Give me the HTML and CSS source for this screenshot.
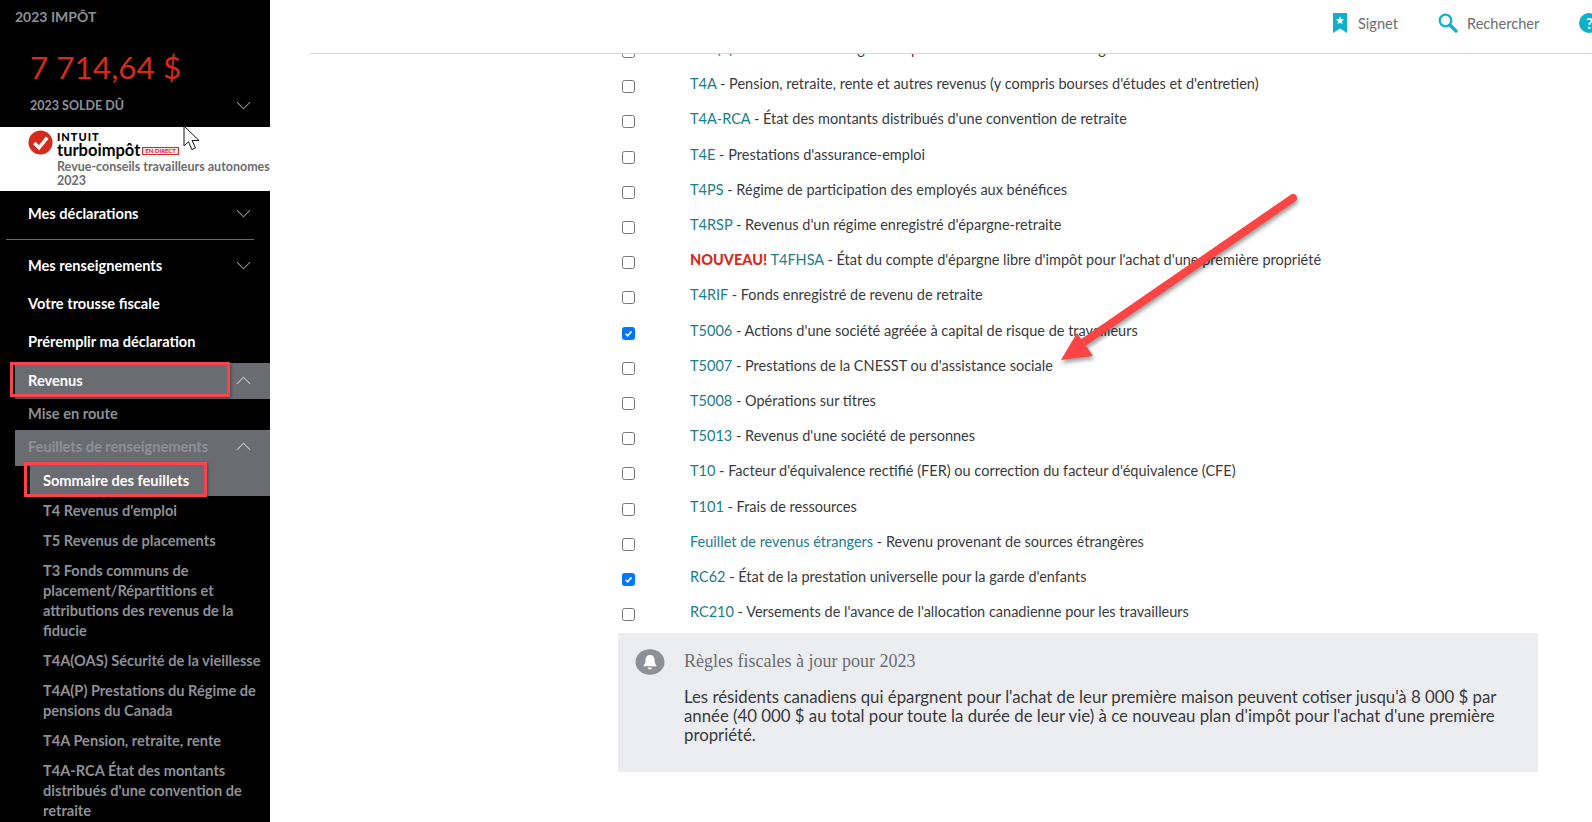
FILE: index.html
```html
<!DOCTYPE html>
<html lang="fr">
<head>
<meta charset="utf-8">
<title>TurboImpôt</title>
<link rel="stylesheet" href="styles.css">
</head>
<body>
<div class="app">
  <aside class="side">
    <div class="year">2023 IMPÔT</div>
    <div class="amount">7 714,64 $</div>
    <div class="due"><span>2023 SOLDE DÛ</span><svg class="chev" viewBox="0 0 16 9"><path d="M1 1l7 7 7-7"/></svg></div>
    <div class="brand">
      <svg class="tick" viewBox="0 0 26 26"><circle cx="13" cy="13" r="12.5" fill="#d52b1e"/><path d="M6.5 13.5l5 5 8.5-10.5" fill="none" stroke="#fff" stroke-width="3.6"/></svg>
      <div class="brand-text">
        <div class="intuit">INTUIT</div>
        <div class="turbo"><span>turboimpôt</span><span class="live">EN DIRECT</span></div>
        <div class="sub">Revue-conseils travailleurs autonomes<br>2023</div>
      </div>
    </div>
    <nav class="nav">
      <div class="item first"><span>Mes déclarations</span><svg class="chev" viewBox="0 0 16 9"><path d="M1 1l7 7 7-7"/></svg></div>
      <hr class="rule">
      <div class="item"><span>Mes renseignements</span><svg class="chev" viewBox="0 0 16 9"><path d="M1 1l7 7 7-7"/></svg></div>
      <div class="item">Votre trousse fiscale</div>
      <div class="item">Préremplir ma déclaration</div>
      <div class="band"><span>Revenus</span><svg class="chev" viewBox="0 0 16 9"><path d="M1 8l7-7 7 7"/></svg><i class="mark mark-a"></i></div>
      <div class="lvl2">Mise en route</div>
      <div class="band dim"><span>Feuillets de renseignements</span><svg class="chev" viewBox="0 0 16 9"><path d="M1 8l7-7 7 7"/></svg></div>
      <div class="current">Sommaire des feuillets<i class="mark mark-b"></i></div>
      <div class="lvl3">T4 Revenus d'emploi</div>
      <div class="lvl3">T5 Revenus de placements</div>
      <div class="lvl3">T3 Fonds communs de placement/Répartitions et attributions des revenus de la fiducie</div>
      <div class="lvl3">T4A(OAS) Sécurité de la vieillesse</div>
      <div class="lvl3">T4A(P) Prestations du Régime de pensions du Canada</div>
      <div class="lvl3">T4A Pension, retraite, rente</div>
      <div class="lvl3">T4A-RCA État des montants distribués d'une convention de retraite</div>
    </nav>
  </aside>
  <main class="main">
    <header class="top">
      <div class="tool"><svg class="ico-book" viewBox="0 0 14 20"><path d="M0 0h14v20l-7-4.5L0 20z" fill="#0eb1c9"/><path d="M7 3.5l1.2 2.6 2.8.3-2.1 1.900.6 2.800L7 9.700l-2.500 1.400.6-2.800L3 6.400l2.800-.3z" fill="#fff"/></svg><span>Signet</span></div>
      <div class="tool tool-search"><svg class="ico-search" viewBox="0 0 20 20"><circle cx="7.500" cy="7.500" r="5.800" fill="none" stroke="#0eb1c9" stroke-width="2.200"/><path d="M12 12l6 6" stroke="#0eb1c9" stroke-width="3.400" stroke-linecap="round"/></svg><span>Rechercher</span></div>
      <div class="help">?</div>
    </header>
    <div class="scroll">
      <div class="list">
        <div class="row"><i class="box"></i><div><a>T4A(P)</a> - Prestations du Régime de pensions du Canada ou du Régime de rentes</div></div>
        <div class="row"><i class="box"></i><div><a>T4A</a> - Pension, retraite, rente et autres revenus (y compris bourses d'études et d'entretien)</div></div>
        <div class="row"><i class="box"></i><div><a>T4A-RCA</a> - État des montants distribués d'une convention de retraite</div></div>
        <div class="row"><i class="box"></i><div><a>T4E</a> - Prestations d'assurance-emploi</div></div>
        <div class="row"><i class="box"></i><div><a>T4PS</a> - Régime de participation des employés aux bénéfices</div></div>
        <div class="row"><i class="box"></i><div><a>T4RSP</a> - Revenus d'un régime enregistré d'épargne-retraite</div></div>
        <div class="row"><i class="box"></i><div><b>NOUVEAU!</b> <a>T4FHSA</a> - État du compte d'épargne libre d'impôt pour l'achat d'une première propriété</div></div>
        <div class="row"><i class="box"></i><div><a>T4RIF</a> - Fonds enregistré de revenu de retraite</div></div>
        <div class="row"><i class="box on"><svg viewBox="0 0 13 13"><path d="M3 6.800l2.500 2.500 4.500-5.300" fill="none" stroke="#fff" stroke-width="2"/></svg></i><div><a>T5006</a> - Actions d'une société agréée à capital de risque de travailleurs</div></div>
        <div class="row"><i class="box"></i><div><a>T5007</a> - Prestations de la CNESST ou d'assistance sociale</div></div>
        <div class="row"><i class="box"></i><div><a>T5008</a> - Opérations sur titres</div></div>
        <div class="row"><i class="box"></i><div><a>T5013</a> - Revenus d'une société de personnes</div></div>
        <div class="row"><i class="box"></i><div><a>T10</a> - Facteur d'équivalence rectifié (FER) ou correction du facteur d'équivalence (CFE)</div></div>
        <div class="row"><i class="box"></i><div><a>T101</a> - Frais de ressources</div></div>
        <div class="row"><i class="box"></i><div><a>Feuillet de revenus étrangers</a> - Revenu provenant de sources étrangères</div></div>
        <div class="row"><i class="box on"><svg viewBox="0 0 13 13"><path d="M3 6.800l2.500 2.500 4.500-5.300" fill="none" stroke="#fff" stroke-width="2"/></svg></i><div><a>RC62</a> - État de la prestation universelle pour la garde d'enfants</div></div>
        <div class="row"><i class="box"></i><div><a>RC210</a> - Versements de l'avance de l'allocation canadienne pour les travailleurs</div></div>
      </div>
      <section class="note">
        <svg class="bell" viewBox="0 0 30 26"><ellipse cx="15" cy="13" rx="14.500" ry="12.800" fill="#8d9096"/><path d="M15 6c-3 0-4.500 2.300-4.500 5 0 3-1 4.500-2 5.500v.8h13v-.8c-1-1-2-2.500-2-5.500 0-2.700-1.500-5-4.500-5z M13 18.500h4c0 1.300-.9 2-2 2s-2-.7-2-2z" fill="#fff"/></svg>
        <div class="note-body">
          <h2>Règles fiscales à jour pour 2023</h2>
          <p>Les résidents canadiens qui épargnent pour l'achat de leur première maison peuvent cotiser jusqu'à 8 000 $ par année (40 000 $ au total pour toute la durée de leur vie) à ce nouveau plan d'impôt pour l'achat d'une première propriété.</p>
        </div>
      </section>
    </div>
  </main>
</div>
<svg class="arrow" viewBox="0 0 260 190"><path d="M233 8L24 152" fill="none" stroke="#fb4444" stroke-width="8" stroke-linecap="round"/><path d="M1 170L17 143L33 166Q14 168 1 170z" fill="#fb4444"/></svg>
<svg class="cursor" viewBox="0 0 18 26"><path d="M1 1v20l4.500-4.300 3.300 7.800 3.700-1.600-3.400-7.400H16z" fill="#fff" stroke="#111" stroke-width="1"/></svg>
</body>
</html>
```
FILE: styles.css
```css
* { box-sizing: border-box; }
html, body { margin: 0; height: 100%; overflow: hidden; background: #fff; }
body { font-family: Lato, "Open Sans", sans-serif; color: #393a3d; position: relative; }
.app { display: flex; height: 822px; }
.side { width: 270px; flex: none; background: #000; overflow: hidden; color: #8d9096; font-weight: 700; }
.year { padding: 9px 0 0 15px; height: 33px; font-size: 14px; line-height: 16px; }
.amount { padding-left: 30px; font-size: 31.500px; line-height: 40px; margin-top: 14px; color: #d52b1e; font-weight: 400; height: 40px; }
.due { display: flex; align-items: center; justify-content: space-between; height: 20px; margin-top: 8px; padding: 0 19px 0 30px; font-size: 12.500px; }
.chev { width: 15px; height: 9px; fill: none; stroke: #8d9096; stroke-width: 1.2; flex: none; }
.band .chev { stroke: #c4c5c9; }
.brand { height: 64px; margin-top: 12px; background: #fff; display: flex; padding: 3px 0 0 28px; gap: 4px; }
.tick { width: 25px; height: 25px; flex: none; }
.brand-text { width: 213px; }
.intuit { font-size: 11px; line-height: 11px; color: #000; font-weight: 900; letter-spacing: 1px; padding-top: 1px; }
.turbo { display: flex; align-items: center; gap: 2px; font-size: 16.500px; line-height: 17px; color: #000; font-weight: 700; }
.live { font-size: 6px; line-height: 6px; color: #d52b1e; border: 1.500px solid #d52b1e; background: #fbe4e2; padding: 0 2px; font-weight: 700; white-space: nowrap; }
.sub { font-size: 12.500px; line-height: 14px; color: #6b6c72; padding-top: 1px; white-space: nowrap; }
.nav { font-size: 14.600px; }
.item { display: flex; align-items: center; justify-content: space-between; height: 38px; padding: 1px 19px 0 28px; color: #fff; }
.item.first { height: 46px; margin-bottom: 2px; padding: 0 19px 1px 28px; }
.rule { margin: 0 16px 6px 6px; border: 0; height: 1px; background: #6b6c72; }
.band { position: relative; display: flex; align-items: center; justify-content: space-between; height: 36px; margin: 3px 0 0 15px; padding: 0 19px 2px 13px; background: #6b6c72; color: #fff; }
.band.dim { margin-top: 0; padding-bottom: 3px; color: #8d9096; }
.lvl2 { height: 31px; padding: 5px 0 0 28px; line-height: 20px; }
.current { position: relative; height: 30px; margin-left: 27px; border-left: 3px solid #1a1a1a; padding-left: 13px; background: #6b6c72; color: #fff; line-height: 30px; }
.lvl3 { padding: 0 6px 10px 43px; line-height: 20px; }
.current + .lvl3 { padding-top: 5px; }
.mark { position: absolute; border: 3px solid #f8444c; pointer-events: none; box-shadow: 1px 2px 3px rgba(0,0,0,.35); }
.mark-a { left: -5px; top: -1px; width: 220px; height: 35px; }
.mark-b { left: -6px; top: -4px; width: 183px; height: 35px; }
.main { flex: 1; min-width: 0; display: flex; flex-direction: column; position: relative; }
.top { flex: none; height: 54px; margin-left: 40px; border-bottom: 1px solid #d8d8d8; display: flex; align-items: flex-start; padding: 13px 0 0 1023px; font-size: 14.600px; color: #6b6c72; background: #fff; position: relative; z-index: 1; white-space: nowrap; }
.tool { display: flex; align-items: center; gap: 11px; height: 20px; }
.tool-search { margin-left: 40px; gap: 9px; }
.ico-book { width: 14px; height: 20px; }
.ico-search { width: 20px; height: 20px; }
.help { width: 20px; height: 20px; border-radius: 50%; background: #0eb1c9; color: #fff; font-weight: 700; font-size: 15px; line-height: 20px; text-align: center; margin-left: 40px; flex: none; }
.scroll { flex: 1; overflow: hidden; padding-left: 348px; }
.list { margin-top: -20px; font-size: 14.500px; }
.row { display: flex; align-items: center; height: 35.200px; white-space: nowrap; }
.row > div { margin-top: -6px; }
.row a { color: #1a7d8c; }
.row b { color: #d52b1e; font-weight: 900; }
.box { width: 13px; height: 13px; border: 1px solid #767676; border-radius: 2.500px; margin: 0 55px 0 4px; flex: none; background: #fff; display: block; }
.box.on { background: #0075ff; border-color: #0075ff; }
.box svg { display: block; width: 11px; height: 11px; }
.note { width: 920px; height: 139px; margin-top: 1px; background: #ecedf0; display: flex; padding: 16px 0 0 17px; gap: 19px; }
.bell { width: 30px; height: 26px; flex: none; }
.note-body { width: 830px; }
.note h2 { margin: 0 0 14px; font: 400 18px/24px "Liberation Serif", serif; color: #6b6c72; }
.note p { margin: 0; font-size: 16.800px; line-height: 19px; color: #393a3d; }
.arrow { position: absolute; left: 1060px; top: 190px; width: 260px; height: 190px; filter: drop-shadow(1px 3px 2px rgba(0,0,0,.4)); overflow: visible; }
.cursor { position: absolute; left: 183px; top: 125px; width: 18px; height: 26px; }
```
